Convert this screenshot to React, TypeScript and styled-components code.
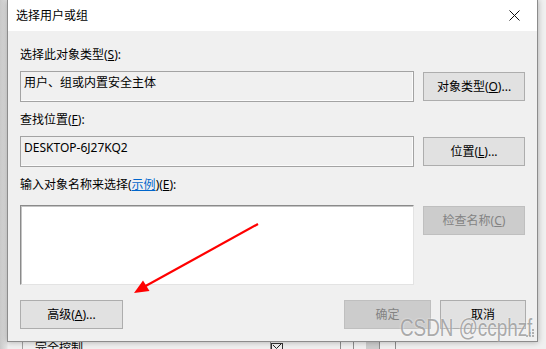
import React from 'react';
import styled, { createGlobalStyle } from 'styled-components';

const GlobalStyle = createGlobalStyle`
  html, body {
    margin: 0;
    padding: 0;
    background: #f0f0f0;
    overflow: hidden;
  }
  * {
    box-sizing: border-box;
  }
`;

const font = `"Noto Sans", "Noto Sans CJK SC", sans-serif`;

const Page = styled.div`
  position: relative;
  width: 546px;
  height: 349px;
  overflow: hidden;
  font-family: ${font};
  font-size: 12px;
  line-height: 16px;
  color: #000;
  background: linear-gradient(to right, #c9c9c9 0px, #e4e4e4 7px, #f0f0f0 8px);
`;

const Dialog = styled.div`
  margin-left: 7px;
  width: 531px;
  height: 342px;
  display: flex;
  flex-direction: column;
  background: #f0f0f0;
  border: 1px solid #8c8c8c;
  border-top: none;
  box-shadow: 0 0 6px rgba(0, 0, 0, 0.3);
  position: relative;
`;

const TitleBar = styled.div`
  height: 31px;
  flex: none;
  display: flex;
  align-items: center;
  justify-content: space-between;
  padding: 1px 8px 0 8px;
  background: #fff;
`;

const Title = styled.span`
  font-size: 12px;
`;

const CloseButton = styled.div`
  width: 30px;
  height: 30px;
  display: flex;
  align-items: center;
  justify-content: center;
  margin-top: -2px;
`;

const Body = styled.div`
  flex: 1;
  display: flex;
  flex-direction: column;
  padding: 16px 11px 0 12px;
`;

const Label = styled.div<{ $top?: number }>`
  height: 16px;
  margin-top: ${({ $top }) => $top ?? 0}px;
`;

const Row = styled.div<{ $top: number; $align?: string }>`
  display: flex;
  gap: 9px;
  align-items: ${({ $align }) => $align ?? 'center'};
  margin-top: ${({ $top }) => $top}px;
`;

const ReadOnlyBox = styled.div`
  width: 394px;
  height: 31px;
  padding: 3px 3px;
  border: 1px solid #a3a3a3;
  background: #f0f0f0;
  box-shadow: inset -1px -1px 0 #fbfbfb;
`;

const NameInput = styled.div`
  width: 394px;
  height: 80px;
  background: #fff;
  border: 1px solid;
  border-color: #8a8a8a #e3e3e3 #e3e3e3 #8a8a8a;
  box-shadow: inset 1px 1px 0 #c4c4c4;
`;

const Button = styled.div<{ $width?: number; $disabled?: boolean; $top?: number }>`
  width: ${({ $width }) => $width ?? 102}px;
  height: 29px;
  margin-top: ${({ $top }) => $top ?? 0}px;
  display: flex;
  align-items: center;
  justify-content: center;
  border: 1px solid ${({ $disabled }) => ($disabled ? '#bfbfbf' : '#adadad')};
  background: ${({ $disabled }) => ($disabled ? '#cccccc' : '#e1e1e1')};
  color: ${({ $disabled }) => ($disabled ? '#838383' : '#000')};
  flex: none;
`;

const Link = styled.span`
  color: #0066cc;
  text-decoration: underline;
`;

const Footer = styled.div`
  display: flex;
  align-items: center;
  margin-top: 15px;
`;

const Spacer = styled.div`
  flex: 1;
`;

const FooterRight = styled.div`
  display: flex;
  gap: 9px;
`;

const Grip = styled.svg`
  position: absolute;
  right: 2px;
  bottom: 3px;
`;

const BehindWindow = styled.div`
  height: 7px;
  margin-left: 22px;
  display: flex;
  overflow: hidden;
  border-left: 1px solid #a0a0a0;
`;

const Cell = styled.div<{ $width: number; $fill?: string }>`
  width: ${({ $width }) => $width}px;
  flex: none;
  border-right: 1px solid #8c8c8c;
  background: ${({ $fill }) => $fill ?? 'transparent'};
  margin-top: -2px;
  line-height: 16px;
  padding-left: 12px;
  font-size: 12px;
`;

const CheckCell = styled.div`
  width: 12px;
  height: 12px;
  flex: none;
  margin-top: 1px;
  border: 1px solid #333;
  border-bottom: none;
  display: flex;
  justify-content: center;
`;

const Watermark = styled.div`
  position: absolute;
  left: 400px;
  top: 316px;
  font-family: "Liberation Sans", Arial, sans-serif;
  font-size: 23px;
  line-height: 24px;
  color: rgba(135, 135, 135, 0.7);
  text-shadow: 0 0 2px rgba(255, 255, 255, 0.9);
  transform: scaleX(0.82);
  transform-origin: left center;
  white-space: nowrap;
  pointer-events: none;
`;

const Overlay = styled.svg`
  position: absolute;
  left: 0;
  top: 0;
  pointer-events: none;
`;

export default function App() {
  return (
    <>
      <GlobalStyle />
      <Page>
        <Dialog>
          <TitleBar>
            <Title>选择用户或组</Title>
            <CloseButton>
              <svg width="11" height="11" viewBox="0 0 11 11">
                <path d="M0.5 0.5 L10.5 10.5 M10.5 0.5 L0.5 10.5" stroke="#111" strokeWidth="1" />
              </svg>
            </CloseButton>
          </TitleBar>
          <Body>
            <Label>
              选择此对象类型(<u>S</u>):
            </Label>
            <Row $top={8}>
              <ReadOnlyBox>用户、组或内置安全主体</ReadOnlyBox>
              <Button>
                对象类型(<u>O</u>)...
              </Button>
            </Row>
            <Label $top={10}>
              查找位置(<u>F</u>):
            </Label>
            <Row $top={8}>
              <ReadOnlyBox>DESKTOP-6J27KQ2</ReadOnlyBox>
              <Button>
                位置(<u>L</u>)...
              </Button>
            </Row>
            <Label $top={10}>
              输入对象名称来选择(<Link>示例</Link>)(<u>E</u>):
            </Label>
            <Row $top={12} $align="flex-start">
              <NameInput />
              <Button $disabled $top={1}>
                检查名称(<u>C</u>)
              </Button>
            </Row>
            <Footer>
              <Button $width={103}>
                高级(<u>A</u>)...
              </Button>
              <Spacer />
              <FooterRight>
                <Button $width={87} $disabled>
                  确定
                </Button>
                <Button $width={86}>取消</Button>
              </FooterRight>
            </Footer>
          </Body>
          <Grip width="10" height="10" viewBox="0 0 10 10">
            <g fill="#b0b0b0">
              <rect x="7" y="1" width="2" height="2" />
              <rect x="4" y="4" width="2" height="2" />
              <rect x="7" y="4" width="2" height="2" />
              <rect x="1" y="7" width="2" height="2" />
              <rect x="4" y="7" width="2" height="2" />
              <rect x="7" y="7" width="2" height="2" />
            </g>
          </Grip>
        </Dialog>
        <BehindWindow>
          <Cell $width={248}>完全控制</Cell>
          <CheckCell>
            <svg width="10" height="6" viewBox="0 0 10 6">
              <path d="M1 1 L4.5 4.5 L9 0" stroke="#222" strokeWidth="1" fill="none" />
            </svg>
          </CheckCell>
          <Cell $width={58} />
          <Cell $width={13} />
          <Cell $width={26} $fill="linear-gradient(to right, transparent 0 12px, #cdcdcd 12px 27px)" />
          <Cell $width={16} />
        </BehindWindow>
        <Overlay width="546" height="349" viewBox="0 0 546 349">
          <line x1="258" y1="224" x2="142" y2="288" stroke="#ff0000" strokeWidth="2.2" />
          <polygon points="134,293 149.5,291 143,280.5" fill="#ff0000" />
        </Overlay>
        <Watermark>CSDN @ccphzf</Watermark>
      </Page>
    </>
  );
}
